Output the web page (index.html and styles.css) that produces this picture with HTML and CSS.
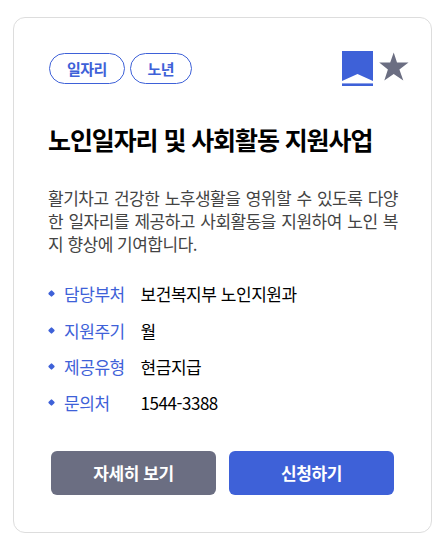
FILE: index.html
```
<!DOCTYPE html>
<html lang="ko">
	<head>
		<meta charset="UTF-8">
		<title>노인일자리 및 사회활동 지원사업</title>
		<link rel="stylesheet" href="styles.css">
	</head>
	<body>
		<div class="card">
			<div class="card_top">
				<div class="tags">
					<span class="tag">일자리</span>
					<span class="tag">노년</span>
				</div>
				<div class="icons">
					<svg class="bookmark" width="31" height="35" viewBox="0 0 31 35">
						<path d="M0 0h31v30l-15.500-7-15.500 7z" fill="#3e61d8"/>
						<path d="M0 32.400h31v2.600H0z" fill="#3e61d8"/>
					</svg>
					<svg class="star" width="30" height="29" viewBox="0 0 30 29">
						<path d="M14.700 0.500l3.300 9.900 11.500.2-9.100 6.800 3.900 11-9.600-6.300-9.400 6.300 3.600-11-8.700-6.800 11-.2z" fill="#6b6e82"/>
					</svg>
				</div>
			</div>
			<h2 class="title">노인일자리 및 사회활동 지원사업</h2>
			<p class="desc">활기차고 건강한 노후생활을 영위할 수 있도록 다양한 일자리를 제공하고 사회활동을 지원하여 노인 복지 향상에 기여합니다.</p>
			<ul class="info">
				<li><span class="label">담당부처</span><span>보건복지부 노인지원과</span></li>
				<li><span class="label">지원주기</span><span>월</span></li>
				<li><span class="label">제공유형</span><span>현금지급</span></li>
				<li><span class="label">문의처</span><span>1544-3388</span></li>
			</ul>
			<div class="buttons">
				<button class="btn">자세히 보기</button>
				<button class="btn apply">신청하기</button>
			</div>
		</div>
	</body>
</html>
```
FILE: styles.css
```
* {
	box-sizing: border-box;
}
body {
	margin: 0;
	background: #fff;
	font-family: "Noto Sans CJK KR", sans-serif;
	word-break: break-all;
}
.card {
	width: 419px;
	height: 516px;
	margin: 17px 0 0 13px;
	padding: 33px 34px 0;
	border: 1px solid #ddd;
	border-radius: 12px;
}
.card_top {
	display: flex;
	justify-content: space-between;
	height: 36px;
}
.tags {
	display: flex;
	gap: 5px;
	padding: 2px 0 0 1px;
}
.tag {
	height: 31px;
	padding: 0 17px;
	border: 1px solid #3e61d8;
	border-radius: 16px;
	color: #3e61d8;
	font-size: 15px;
	font-weight: 600;
	line-height: 29px;
	letter-spacing: -0.6px;
}
.icons {
	display: flex;
	gap: 6px;
	margin-right: -12px;
}
.star {
	margin-top: 1px;
}
.title {
	margin: 33px 0 0;
	font-size: 25px;
	font-weight: 700;
	line-height: 38px;
	letter-spacing: -1.1px;
	white-space: nowrap;
}
.desc {
	width: 350px;
	margin: 28px 0 0;
	color: #444;
	font-size: 17px;
	line-height: 23px;
	letter-spacing: -0.5px;
	text-align: justify;
}
.info {
	margin: 20.600px 0 0;
	padding: 0;
	list-style: none;
}
.info li {
	display: flex;
	align-items: center;
	height: 36.400px;
	font-size: 17px;
	letter-spacing: -0.45px;
}
.info li::before {
	content: "";
	width: 5px;
	height: 5px;
	margin: 0 10px 0 1px;
	border-radius: 1px;
	background: #3e61d8;
	transform: rotate(45deg);
}
.label {
	width: 76.500px;
	color: #3e61d8;
}
.buttons {
	display: flex;
	gap: 13px;
	margin: 29.800px 0 0 3px;
}
.btn {
	width: 165px;
	height: 44px;
	padding: 0;
	border: 0;
	border-radius: 6px;
	background: #6b6e82;
	color: #fff;
	font: 700 17px "Noto Sans CJK KR", sans-serif;
	letter-spacing: -0.4px;
}
.apply {
	background: #3e61d8;
}
```
